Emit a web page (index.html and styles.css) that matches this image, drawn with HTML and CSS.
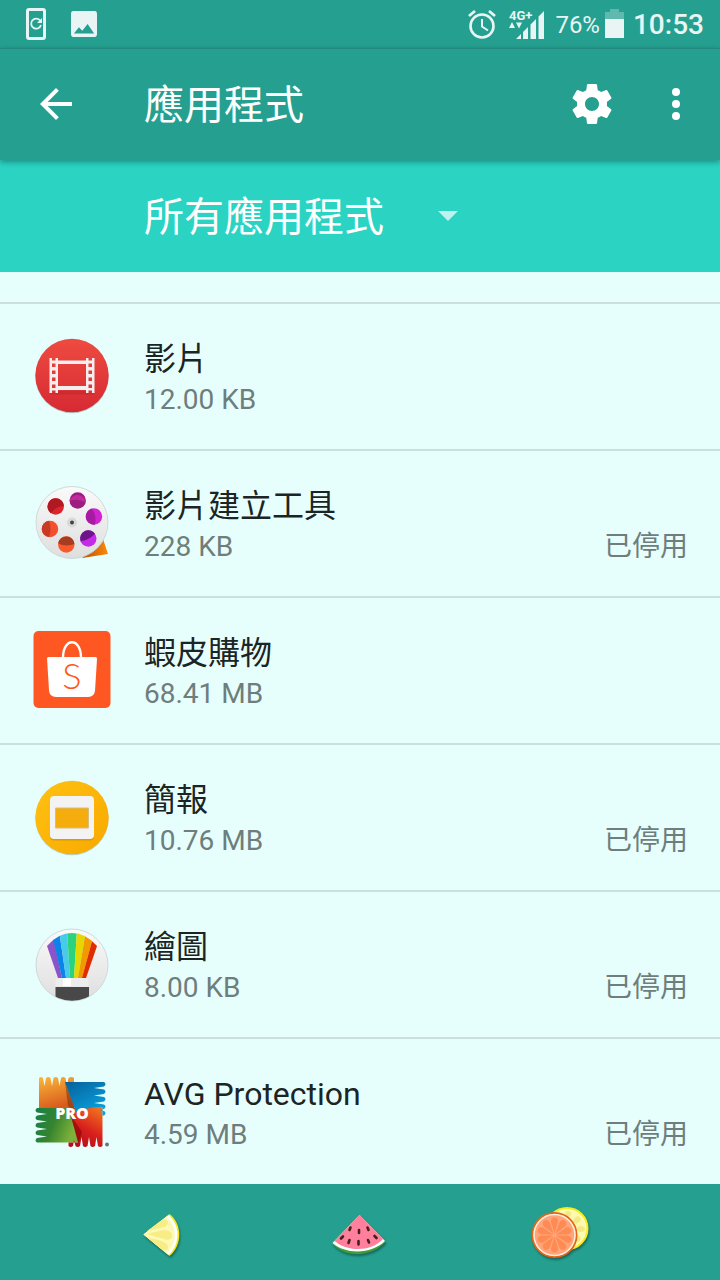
FILE: index.html
```
<!DOCTYPE html>
<html lang="zh-Hant">
<head>
  <meta charset="UTF-8" />
  <meta name="viewport" content="width=device-width, initial-scale=1.0"/>
  <title>應用程式</title>
  <link rel="stylesheet" href="styles.css">
</head>
<body>
  <div class="status-bar">
    <svg class="status-phone" width="20" height="32" viewBox="0 0 20 32">
      <rect x="1.500" y="1.500" width="17" height="29" rx="1.500" fill="none" stroke="currentColor" stroke-width="3"/>
      <path d="M14 12.400A5 5 0 1 0 15 17" fill="none" stroke="currentColor" stroke-width="1.800"/>
      <path d="M16 10v5h-5z" fill="currentColor"/>
    </svg>
    <svg width="26" height="26" viewBox="3 3 18 18">
      <path fill="currentColor" d="M21 19V5c0-1.100-.5-2-1.500-2H4.500C3.500 3 3 3.900 3 5v14c0 1.100.5 2 1.500 2h15c1 0 1.500-.9 1.500-2zM5 18.500l3.500-4.200 2.300 2.300 3.700-4.600 4.500 6.500z"/>
    </svg>
    <div class="status-right">
      <svg width="28" height="30" viewBox="0 0 28 30" fill="none" stroke="currentColor">
        <circle cx="14" cy="17" r="11.500" stroke-width="2.600"/>
        <path d="M1 7l6-5M27 7l-6-5" stroke-width="2.800"/>
        <path d="M14 10v7.500l6 4" stroke-width="2"/>
      </svg>
      <svg class="signal" width="38" height="32" viewBox="0 -2 38 32" fill="currentColor">
        <text x="1" y="10" class="signal-text">4G+</text>
        <path d="M1 18l3-6 3 6zM8 12.500h6l-3 6zM8 29l5-5v5zM15 22l5-5v12h-5zM22.500 14.500L28 9v20h-5.500zM30.500 6.500L36 1v28h-5.500z"/>
      </svg>
      <span class="battery-text">76%</span>
      <svg class="battery" width="19" height="30" viewBox="0 0 19 30" fill="currentColor">
        <path opacity=".3" d="M0 3h5V0h9v3h5v7H0z"/>
        <path d="M0 10h19v19H0z"/>
      </svg>
      <span class="clock">10:53</span>
    </div>
  </div>

  <header class="toolbar">
    <button class="icon-button" aria-label="返回">
      <svg viewBox="0 0 24 24"><path d="M20 11H7.830l5.590-5.590L12 4l-8 8 8 8 1.410-1.410L7.830 13H20v-2z"/></svg>
    </button>
    <h1>應用程式</h1>
    <div class="actions">
      <button class="icon-button" aria-label="設定">
        <svg viewBox="0 0 24 24"><path d="M19.430 12.980c.04-.32.07-.64.07-.98s-.03-.66-.07-.98l2.110-1.650c.19-.15.24-.42.12-.64l-2-3.460c-.12-.22-.39-.3-.61-.22l-2.490 1c-.52-.4-1.080-.73-1.690-.98l-.38-2.650C14.460 2.180 14.250 2 14 2h-4c-.25 0-.46.18-.49.42l-.38 2.650c-.61.25-1.170.59-1.690.98l-2.490-1c-.23-.09-.49 0-.61.22l-2 3.460c-.13.22-.07.49.12.64l2.110 1.650c-.04.32-.07.65-.07.98s.03.66.07.98l-2.110 1.650c-.19.15-.24.42-.12.64l2 3.460c.12.22.39.3.61.22l2.490-1c.52.4 1.080.73 1.690.98l.38 2.650c.03.24.24.42.49.42h4c.25 0 .46-.18.49-.42l.38-2.650c.61-.25 1.170-.59 1.690-.98l2.490 1c.23.09.49 0 .61-.22l2-3.460c.12-.22.07-.49-.12-.64l-2.110-1.650zM12 15.500c-1.930 0-3.500-1.570-3.500-3.500s1.570-3.500 3.500-3.500 3.500 1.570 3.500 3.500-1.570 3.500-3.500 3.500z"/></svg>
      </button>
      <button class="icon-button" aria-label="更多選項">
        <svg viewBox="0 0 24 24"><circle cx="12" cy="6" r="2"/><circle cx="12" cy="12" r="2"/><circle cx="12" cy="18" r="2"/></svg>
      </button>
    </div>
  </header>

  <div class="filter">
    <select aria-label="篩選應用程式">
      <option>所有應用程式</option>
    </select>
    <svg width="20" height="10" viewBox="0 0 20 10"><path d="M0 0h20L10 10z"/></svg>
  </div>

  <main>
    <ul class="app-list">
      <li class="app">
        <svg class="app-icon" viewBox="0 0 80 80">
          <defs>
            <linearGradient id="red" x2="0" y2="1"><stop offset="0" stop-color="#ee4b40"/><stop offset="1" stop-color="#d62a33"/></linearGradient>
          </defs>
          <circle cx="40" cy="39.500" r="36.700" fill="#8aa5a0" opacity=".5"/>
          <circle cx="40" cy="38.500" r="36.700" fill="url(#red)"/>
          <path fill="#b8252c" opacity=".5" d="M18 56h8v-2h28v2h8v1.500H18z"/>
          <path fill="#f4eeee" fill-rule="evenodd" d="M17.500 21h2.500v2.500h3.500V21H26v2.500h28V21h2.500v2.500H60V21h2.500v35H60v-2.500h-3.500V56H54v-3H26v3h-2.500v-2.500H20V56h-2.500zM26 27v22h28V27z
            M20 26.500v3.500h3.500v-3.500zM20 33.500V37h3.500v-3.500zM20 40.500V44h3.500v-3.500zM20 47.500V51h3.500v-3.500zM56.500 26.500v3.500H60v-3.500zM56.500 33.500V37H60v-3.500zM56.500 40.500V44H60v-3.500zM56.500 47.500V51H60v-3.500z"/>
        </svg>
        <div class="app-info">
          <h2>影片</h2>
          <p><span>12.00 KB</span></p>
        </div>
      </li>

      <li class="app">
        <svg class="app-icon" viewBox="0 0 80 80">
          <defs>
            <linearGradient id="reel" x2="0" y2="1"><stop offset="0" stop-color="#fafafa"/><stop offset="1" stop-color="#dedede"/></linearGradient>
            <linearGradient id="film"><stop offset="0" stop-color="#b84d00"/><stop offset="1" stop-color="#ff8a0a"/></linearGradient>
          </defs>
          <path d="M50 74l26-4L71 55z" fill="url(#film)"/>
          <circle cx="40" cy="38.500" r="36" fill="url(#reel)" stroke="#c5d2d0" stroke-width=".8"/>
          <circle cx="23.700" cy="22.500" r="8.200" fill="#d9252d"/>
          <path d="M19 29.200A8.200 8.200 0 1 1 31.900 22Q24 22 19 29.200z" fill="#b01822"/>
          <circle cx="45.700" cy="16.500" r="8.200" fill="#9c1c80"/>
          <path d="M37.500 17Q46 14 53.600 18.500A8.200 8.200 0 0 0 37.500 17z" fill="#c02a9c"/>
          <circle cx="62" cy="32.500" r="8.200" fill="#d024d0"/>
          <path d="M60 24.500Q65 32 63 40.600A8.200 8.200 0 0 1 60 24.500z" fill="#a81aa4"/>
          <circle cx="56.300" cy="54.500" r="8.200" fill="#c42ae8"/>
          <path d="M48.600 57.300A8.200 8.200 0 0 1 63 49.800Q57 56 48.600 57.300z" fill="#6c1488"/>
          <circle cx="34.300" cy="60.500" r="8.200" fill="#f75a2c"/>
          <path d="M26.200 59.500A8.200 8.200 0 0 1 42.500 60Q34 63 26.200 59.500z" fill="#a83c20"/>
          <circle cx="18" cy="45" r="8.200" fill="#f2502e"/>
          <path d="M17 36.800a8.200 8.200 0 0 0 0 16.300Q20 45 17 36.800z" fill="#c83a24"/>
          <circle cx="40" cy="38.500" r="5" fill="#d8d8d8"/>
          <circle cx="40" cy="38.500" r="2" fill="#444"/>
        </svg>
        <div class="app-info">
          <h2>影片建立工具</h2>
          <p><span>228 KB</span><span>已停用</span></p>
        </div>
      </li>

      <li class="app">
        <svg class="app-icon" viewBox="0 0 80 80">
          <rect x="1.500" y="0" width="77" height="77" rx="5" fill="#ff5722"/>
          <path d="M31 27C31 6 49 6 49 27" fill="none" stroke="#fff" stroke-width="2.400"/>
          <path d="M16.500 26h47q1.500 0 1.500 1.500l-2 32q-.5 6.500-7 6.500H24q-6.500 0-7-6.500l-2-32q0-1.500 1.500-1.500z" fill="#fff"/>
          <text x="40" y="58" class="bag-letter">S</text>
        </svg>
        <div class="app-info">
          <h2>蝦皮購物</h2>
          <p><span>68.41 MB</span></p>
        </div>
      </li>

      <li class="app">
        <svg class="app-icon" viewBox="0 0 80 80">
          <defs>
            <linearGradient id="amber" x2="1" y2="1"><stop offset="0" stop-color="#ffc112"/><stop offset="1" stop-color="#f8a900"/></linearGradient>
          </defs>
          <circle cx="40" cy="40.500" r="36.700" fill="#8aa5a0" opacity=".5"/>
          <circle cx="40" cy="39.500" r="36.700" fill="url(#amber)"/>
          <rect x="18" y="19.500" width="44" height="43" rx="4" fill="#c88a00" opacity=".6"/>
          <rect x="18" y="18" width="44" height="43" rx="4" fill="#f3f3f3"/>
          <path d="M23.500 30h33v20h-33z" fill="#f4ad0c" stroke="#d9bd7c"/>
        </svg>
        <div class="app-info">
          <h2>簡報</h2>
          <p><span>10.76 MB</span><span>已停用</span></p>
        </div>
      </li>

      <li class="app">
        <svg class="app-icon" viewBox="0 0 80 80">
          <defs>
            <clipPath id="disc"><circle cx="40" cy="40" r="35.800"/></clipPath>
            <clipPath id="fan"><path d="M15 21Q26 8 40 8t25 13L54 53H26z"/></clipPath>
          </defs>
          <circle cx="40" cy="40" r="36" fill="url(#reel)" stroke="#c5d2d0" stroke-width=".8"/>
          <g clip-path="url(#fan)">
            <path fill="#8a55c8" d="M5 5h15l10 48h-5z"/>
            <path fill="#0a84e8" d="M19 5h8l7 48h-4z"/>
            <path fill="#48cbe8" d="M27 5h8l3 48h-4z"/>
            <path fill="#2bd47c" d="M35 5h10l-3 48h-4z"/>
            <path fill="#e4d800" d="M45 5h9l-8 48h-4z"/>
            <path fill="#f09a00" d="M54 5h9L50 53h-4z"/>
            <path fill="#e02c00" d="M63 5h12L55 53h-5z"/>
          </g>
          <g clip-path="url(#disc)">
            <path d="M23.500 61.500V57q0-4 4-4h25q4 0 4 4v4.500z" fill="#eceeee"/>
            <path d="M31 53h8v8h-8z" fill="#fff"/>
            <path d="M23.500 62H57v18H23.500z" fill="#484848"/>
          </g>
        </svg>
        <div class="app-info">
          <h2>繪圖</h2>
          <p><span>8.00 KB</span><span>已停用</span></p>
        </div>
      </li>

      <li class="app">
        <svg class="app-icon" viewBox="0 0 80 80">
          <defs>
            <linearGradient id="avg-orange" x2=".3" y2="1"><stop offset="0" stop-color="#fbb83a"/><stop offset="1" stop-color="#d85a1c"/></linearGradient>
            <linearGradient id="avg-blue" y2="1" x2=".6"><stop offset="0" stop-color="#06609c"/><stop offset="1" stop-color="#08a0dc"/></linearGradient>
            <linearGradient id="avg-green" x2="1" y2=".3"><stop offset="0" stop-color="#16804a"/><stop offset=".5" stop-color="#35832f"/><stop offset="1" stop-color="#7db23a"/></linearGradient>
            <linearGradient id="avg-red" x1=".9" x2=".4" y2="1"><stop offset="0" stop-color="#f47a20"/><stop offset=".6" stop-color="#d8201c"/><stop offset="1" stop-color="#b80e1a"/></linearGradient>
          </defs>
          <path fill="url(#avg-orange)" d="M7 38V6q2-2 4 0l1.500 8L14 6q2-2 4.500 0l1.500 8 1.500-8q2-2 4.500 0l1.500 8L29 6q2-2 4.500 0l1.500 8 1.500-8q3-2 5.500 0v32z"/>
          <path fill="url(#avg-green)" d="M46 70.500H5q-3-2 0-4.500l10-1.500L5 63q-3-2 0-4.500L15 57 5 55.500q-3-2 0-4.500l10-1.500L5 48q-3-2 0-4.500L15 42 5 40.500q-3-2 0-4.500h41z"/>
          <path fill="url(#avg-red)" d="M70.500 34v40q-2.500 2-4.500 0l-1.500-9-1.500 9q-2.500 2-4.500 0L57 65l-1.500 9q-2.500 2-4.500 0l-1.500-9-1.500 9q-2.500 2-4.500 0L42 68l-1 6q-2.500 2-4.500 0V70.500H46L37 36z"/>
          <path fill="url(#avg-blue)" d="M33 10h39q3 2 0 4.500L62 16l10 1.500q3 2 0 4.500l-10 1.500L72 25q3 2 0 4.500L62 31l10 1.500q3 2 0 4.500l-5 1 5 1q3 2 0 4.500h-1.500V35Q56 35 44 40z"/>
          <path d="M33 10l11 30-8-6z" fill="#5a2a10" opacity=".45"/>
          <path d="M46.500 70.500L38 42l12 18z" fill="#600" opacity=".45"/>
          <text x="40" y="47" class="pro">PRO</text>
          <circle cx="75" cy="72.500" r="2" fill="#68777a"/>
        </svg>
        <div class="app-info">
          <h2>AVG Protection</h2>
          <p><span>4.59 MB</span><span>已停用</span></p>
        </div>
      </li>
    </ul>
  </main>

  <nav class="nav-bar">
    <button aria-label="返回">
      <svg viewBox="0 0 80 80">
        <path d="M23.500 42.500L49.500 22C62 31 63 53 49.500 64z" fill="#f5e614"/>
        <path d="M23.500 42.500L48.500 23C60 32 61 52 48.500 63z" fill="#fff"/>
        <path d="M23.500 42.500L46.500 25C57 34 58 51 46.500 61z" fill="#fdf9b4"/>
        <path d="M27 39L42 28q6-2 6 3-1 4-8 5zM27 42l17-4q10 1 8 7-2 4-8 2zM27 45.500l13 3q9 3 8 8-3 4-7 0z" fill="#f8ec84"/>
      </svg>
    </button>
    <button aria-label="主畫面">
      <svg viewBox="0 0 80 80">
        <path d="M39.500 23L12 51.500C25 67 53 65 65.500 49.500z" fill="#3b9e3a"/>
        <path d="M39.500 23L12.500 51C26 63 52 62 65 49z" fill="#fff"/>
        <path d="M39.500 23L14.500 49C27 60 51 60 63 47z" fill="#ff7f9c"/>
        <g stroke="#47201d" stroke-width="2.600" stroke-linecap="round">
          <path d="M30.500 35.500l-1 2.500M39 38v3M47.500 35.500l1 2.500M23 44.500l-2 2M29.500 48l-1 3M38.500 49v3.500M48 48l1 2.500M54.500 44l2 2"/>
        </g>
      </svg>
    </button>
    <button aria-label="最近使用">
      <svg viewBox="0 0 80 80">
        <circle cx="47" cy="36.500" r="20.500" fill="#fdf9b4" stroke="#f5ee1e" stroke-width="2"/>
        <g fill="#f5e981">
          <circle cx="48" cy="22" r="3"/><ellipse cx="57" cy="28" rx="4" ry="3" transform="rotate(-40 57 28)"/><ellipse cx="61" cy="37" rx="4" ry="3"/><ellipse cx="57" cy="46" rx="4" ry="3" transform="rotate(40 57 46)"/>
        </g>
        <circle cx="34.500" cy="43" r="22" fill="#ffa57c" stroke="#e2661a" stroke-width="2"/>
        <circle cx="34.500" cy="43" r="20.500" fill="none" stroke="#fff0dc" stroke-width="1.500"/>
        <g fill="#ff8a52">
          <path id="seg" d="M34.500 41.500l-3.500-12q0-4 3.500-4t3.500 4z"/>
          <use href="#seg" transform="rotate(36 34.500 43)"/>
          <use href="#seg" transform="rotate(72 34.500 43)"/>
          <use href="#seg" transform="rotate(108 34.500 43)"/>
          <use href="#seg" transform="rotate(144 34.500 43)"/>
          <use href="#seg" transform="rotate(180 34.500 43)"/>
          <use href="#seg" transform="rotate(216 34.500 43)"/>
          <use href="#seg" transform="rotate(252 34.500 43)"/>
          <use href="#seg" transform="rotate(288 34.500 43)"/>
          <use href="#seg" transform="rotate(324 34.500 43)"/>
        </g>
      </svg>
    </button>
  </nav>
</body>
</html>
```
FILE: styles.css
```
* {
  box-sizing: border-box;
}
body {
  margin: 0;
  min-height: 100vh;
  display: flex;
  flex-direction: column;
  font-family: Roboto, "Noto Sans CJK TC", sans-serif;
  background-color: #e6fffd;
  color: #1c2424;
}
svg {
  display: block;
  flex-shrink: 0;
}
button {
  padding: 0;
  border: none;
  background: none;
  cursor: pointer;
}

/* status bar */
.status-bar {
  display: flex;
  align-items: center;
  gap: 25px;
  height: 48px;
  padding: 0 16px 0 26px;
  background-color: #25a090;
  color: #e8f5f4;
}
.status-right {
  display: flex;
  align-items: center;
  margin-left: auto;
}
.signal {
  margin: 0 9px 0 12px;
}
.signal-text {
  font-size: 13px;
  font-weight: 700;
}
.battery-text,
.clock {
  padding-top: 2px;
  line-height: 32px;
}
.battery-text {
  font-size: 24px;
}
.battery {
  margin: 0 9px 0 5px;
}
.clock {
  font-size: 28px;
  font-weight: 500;
}

.toolbar {
  position: relative;
  display: flex;
  align-items: center;
  height: 112px;
  padding: 0 20px 0 32px;
  background-color: #25a090;
  box-shadow: inset 0 1px #23897e, 0 2px 6px rgba(0,0,0,0.35);
  color: #fff;
}
.toolbar h1 {
  margin: 0 0 0 64px;
  padding-top: 4px;
  font-size: 40px;
  font-weight: 400;
  line-height: 56px;
}
.actions {
  display: flex;
  gap: 36px;
  margin-left: auto;
}
.icon-button svg {
  width: 48px;
  height: 48px;
  fill: #fff;
}

.filter {
  display: flex;
  align-items: center;
  gap: 54px;
  height: 112px;
  padding-left: 144px;
  background-color: #2bd3c3;
}
.filter select {
  appearance: none;
  padding: 4px 0 0;
  border: none;
  background: none;
  color: #fff;
  font-family: inherit;
  font-size: 40px;
  line-height: 56px;
}
.filter svg {
  fill: #bff2ed;
}

main {
  flex: 1;
  padding-top: 30px;
}
.app-list {
  list-style: none;
  margin: 0;
  padding: 0;
}
.app {
  display: flex;
  align-items: center;
  gap: 32px;
  height: 147px;
  padding: 0 32px;
  border-top: 2px solid #cbdfdd;
}
.app-icon {
  width: 80px;
  height: 80px;
}
.app-info {
  flex: 1;
  padding-top: 3px;
}
.app-info h2 {
  margin: 0;
  font-size: 32px;
  font-weight: 400;
  line-height: 44px;
}
.app-info p {
  display: flex;
  justify-content: space-between;
  margin: 0;
  font-size: 28px;
  line-height: 38px;
  color: #6f7d7c;
}
.bag-letter {
  font-family: Lato, sans-serif;
  font-size: 36px;
  font-weight: 300;
  text-anchor: middle;
  fill: #ff5722;
}
.pro {
  font-family: "Open Sans", sans-serif;
  font-size: 16px;
  font-weight: 800;
  text-anchor: middle;
  fill: #fff;
}

.nav-bar {
  display: flex;
  align-items: center;
  justify-content: center;
  gap: 120px;
  height: 96px;
  background-color: #25a090;
}
.nav-bar svg {
  width: 80px;
  height: 80px;
  filter: drop-shadow(1px 2px 1px rgba(0,0,0,0.35));
}
```
